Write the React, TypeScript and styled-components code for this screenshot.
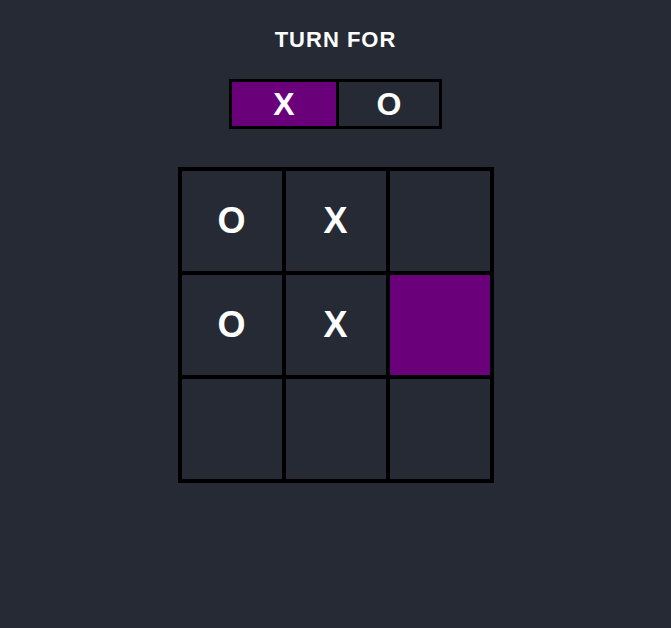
import React, { useState } from "react";
import styled, { createGlobalStyle } from "styled-components";

const GlobalStyle = createGlobalStyle`
  html, body {
    margin: 0;
    padding: 0;
    background: #262a34;
  }
  * { box-sizing: border-box; }
`;

const Page = styled.main`
  min-height: 100vh;
  background: #262a34;
  display: flex;
  flex-direction: column;
  align-items: center;
  padding-top: 28px;
  font-family: "Liberation Sans", Arial, sans-serif;
  color: #ffffff;
`;

const Title = styled.h1`
  margin: 0;
  font-size: 22px;
  line-height: 24px;
  font-weight: 700;
  letter-spacing: 1px;
`;

const TurnBar = styled.div`
  margin-top: 27px;
  display: flex;
  border: 3px solid #000;
`;

const TurnItem = styled.div<{ $active: boolean; $w: number; $divider: boolean }>`
  width: ${(p) => p.$w}px;
  height: 44px;
  display: flex;
  align-items: center;
  justify-content: center;
  font-size: 32px;
  font-weight: 700;
  background: ${(p) => (p.$active ? "#6a007a" : "transparent")};
  border-left: ${(p) => (p.$divider ? "3px solid #000" : "none")};
  box-sizing: content-box;
`;

const Board = styled.div`
  margin-top: 38px;
  display: grid;
  grid-template-columns: repeat(3, 104px);
  border: 2px solid #000;
`;

const Cell = styled.button<{ $highlight: boolean }>`
  width: 104px;
  height: 104px;
  border: 2px solid #000;
  padding: 0;
  margin: 0;
  background: ${(p) => (p.$highlight ? "#6a007a" : "#262a34")};
  color: #fff;
  font-family: "Liberation Sans", Arial, sans-serif;
  font-size: 36px;
  font-weight: 700;
  display: flex;
  align-items: center;
  justify-content: center;
  cursor: pointer;
`;

export default function App() {
  const [cells] = useState<string[]>(["O", "X", "", "O", "X", "", "", "", ""]);
  const turn = "X";
  const highlighted = 5;

  return (
    <>
      <GlobalStyle />
      <Page>
        <Title>TURN FOR</Title>
        <TurnBar>
          <TurnItem $active={turn === "X"} $w={104} $divider={false}>
            X
          </TurnItem>
          <TurnItem $active={turn === "O"} $w={100} $divider>
            O
          </TurnItem>
        </TurnBar>
        <Board>
          {cells.map((c, i) => (
            <Cell key={i} $highlight={i === highlighted}>
              {c}
            </Cell>
          ))}
        </Board>
      </Page>
    </>
  );
}
